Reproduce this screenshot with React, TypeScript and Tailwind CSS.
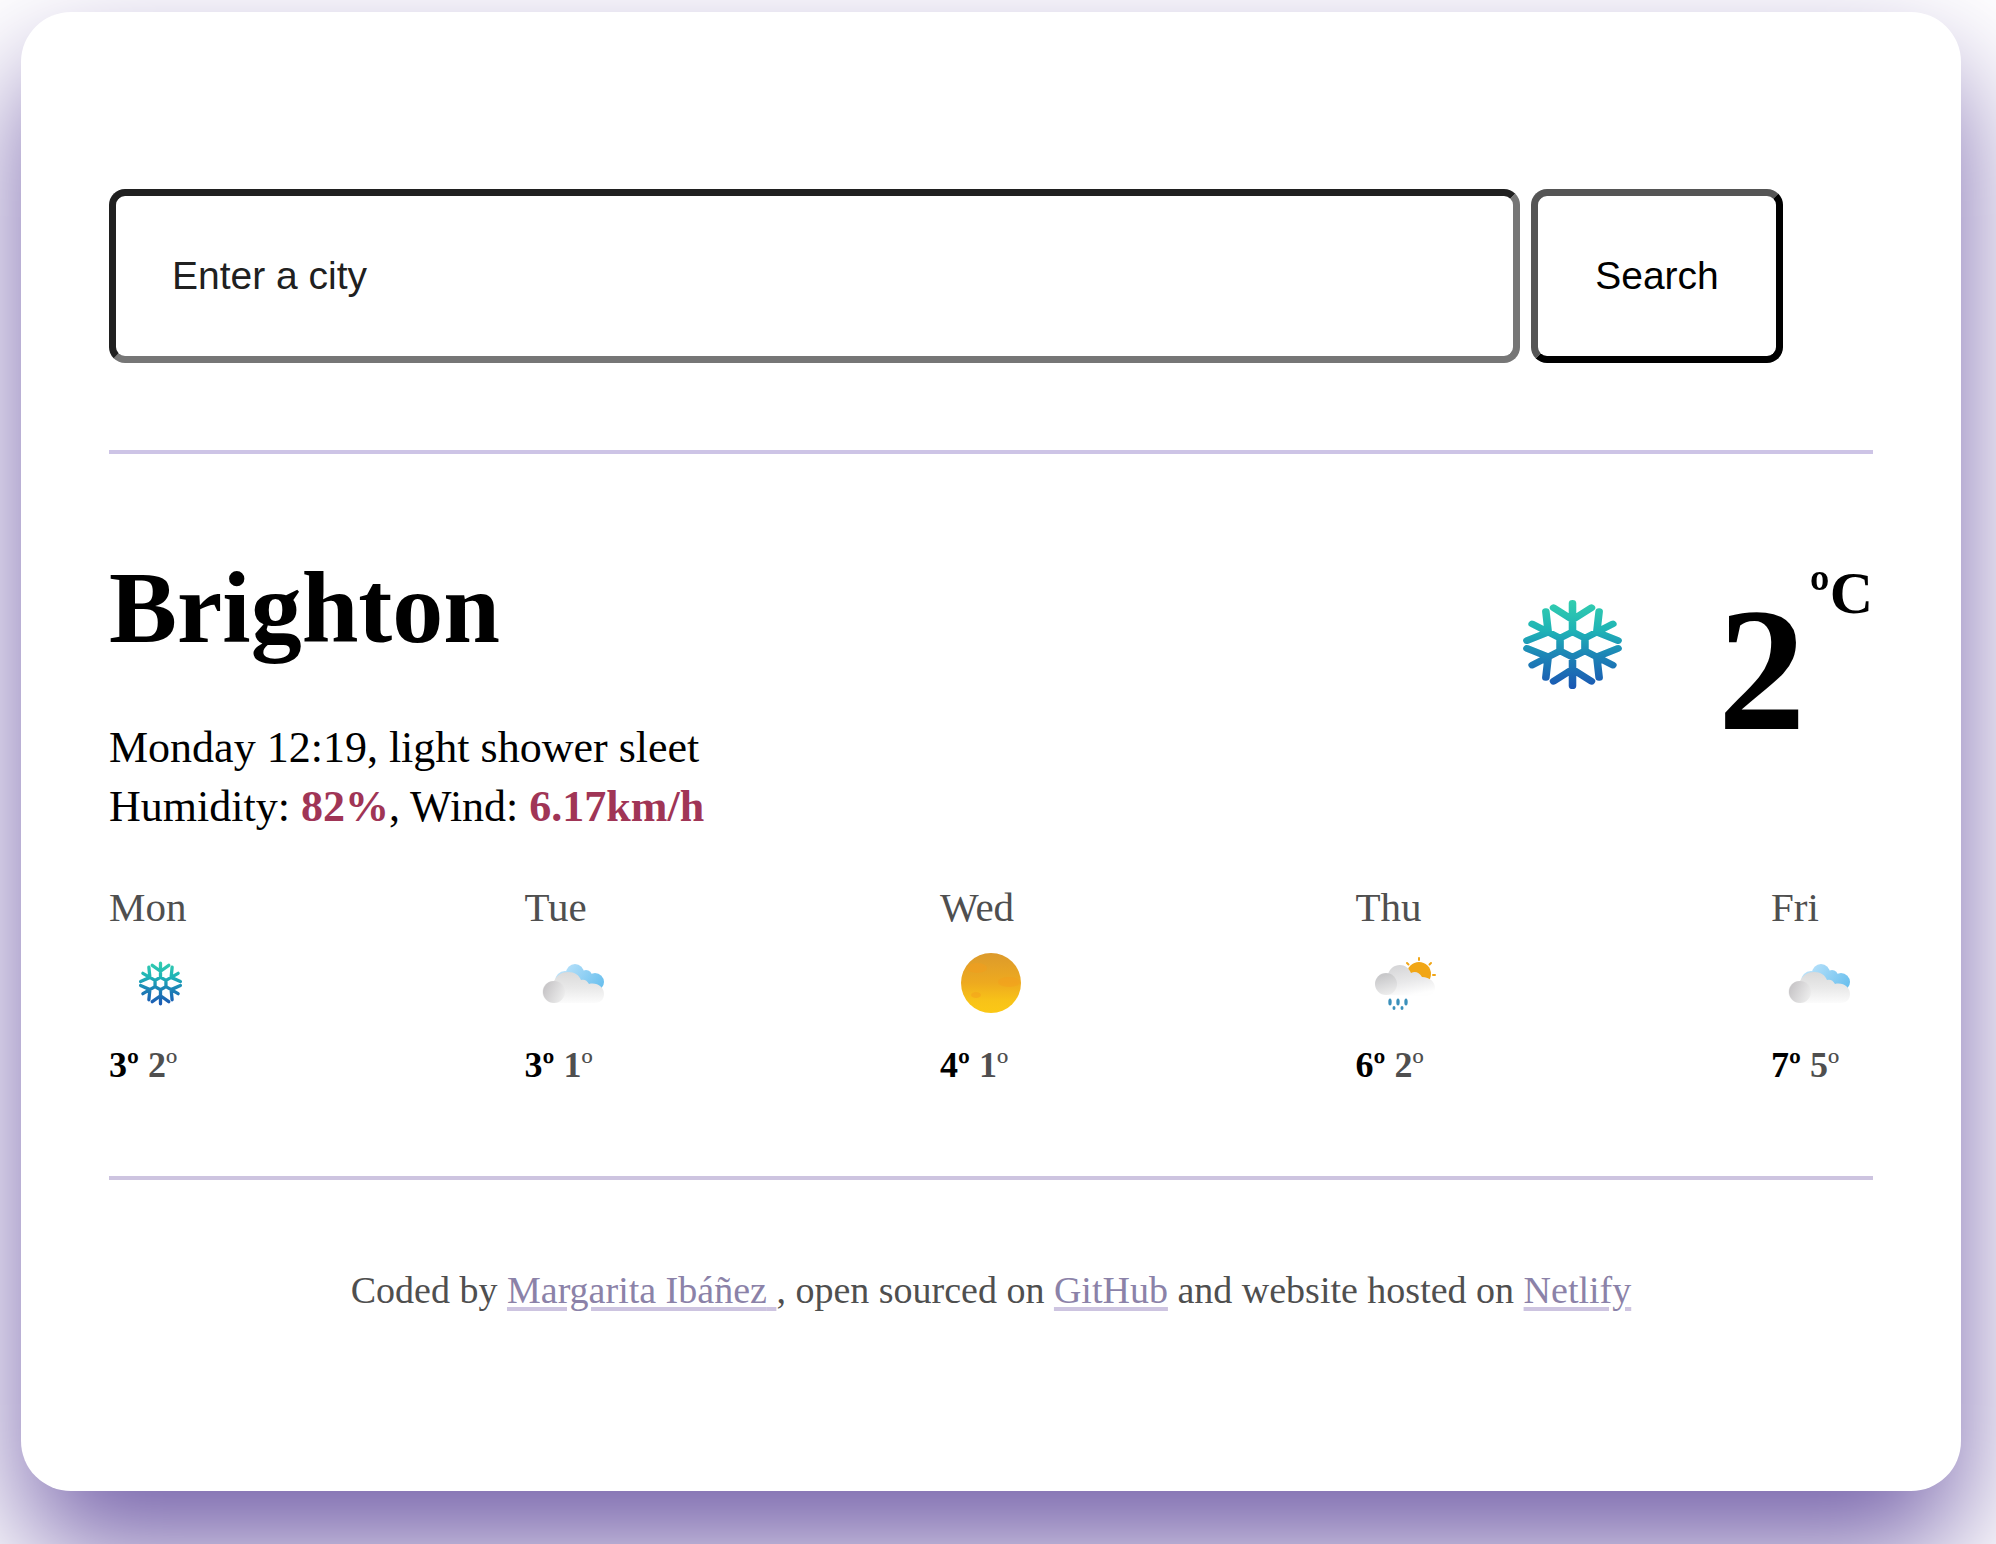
import React from "react";

const point = (x: number, y: number, turn: number) => {
  const a = (turn * Math.PI) / 180;
  const px = x * Math.cos(a) - y * Math.sin(a);
  const py = x * Math.sin(a) + y * Math.cos(a);
  return `${px.toFixed(1)} ${py.toFixed(1)}`;
};

const turns = [0, 60, 120, 180, 240, 300];

const flakePath =
  turns
    .map(
      (t) =>
        `M${point(0, -38, t)}L${point(0, -123, t)}M${point(-50, -110, t)}L${point(0, -74, t)}L${point(50, -110, t)}`
    )
    .join("") +
  "M" +
  turns.map((t) => point(0, -38, t)).join("L") +
  "Z";

function Snowflake({ id, className }: { id: string; className: string }) {
  return (
    <svg viewBox="-136 -136 272 272" preserveAspectRatio="none" className={className} aria-hidden="true">
      <defs>
        <linearGradient id={id} gradientUnits="userSpaceOnUse" x1="0" y1="-136" x2="0" y2="136">
          <stop offset="0" stopColor="#33cfae" />
          <stop offset="0.35" stopColor="#1fb3b6" />
          <stop offset="0.6" stopColor="#1d87b6" />
          <stop offset="1" stopColor="#1a55b3" />
        </linearGradient>
      </defs>
      <path d={flakePath} fill="none" stroke={`url(#${id})`} strokeWidth="20" strokeLinecap="round" strokeLinejoin="round" />
    </svg>
  );
}

function Clouds({ id }: { id: string }) {
  return (
    <svg viewBox="0 0 102 102" className="size-full" aria-hidden="true">
      <defs>
        <linearGradient id={`${id}-sky`} gradientUnits="userSpaceOnUse" x1="40" y1="32" x2="76" y2="56">
          <stop offset="0" stopColor="#b8e1fa" />
          <stop offset="1" stopColor="#6bc0ee" />
        </linearGradient>
        <linearGradient id={`${id}-front`} gradientUnits="userSpaceOnUse" x1="0" y1="40" x2="0" y2="72">
          <stop offset="0" stopColor="#dadada" />
          <stop offset="0.5" stopColor="#e9e9e9" />
          <stop offset="1" stopColor="#fdfdfd" />
        </linearGradient>
        <linearGradient id={`${id}-ball`} gradientUnits="userSpaceOnUse" x1="20" y1="55" x2="39" y2="64">
          <stop offset="0" stopColor="#c8c6c8" />
          <stop offset="1" stopColor="#ececec" />
        </linearGradient>
      </defs>
      <g fill={`url(#${id}-sky)`}>
        <circle cx="40" cy="49" r="10" />
        <circle cx="50" cy="41" r="9" />
        <circle cx="61" cy="44" r="6" />
        <circle cx="70" cy="50" r="9" />
        <path d="M48 44h20v14H48z" />
      </g>
      <path
        d="M28 71A11 11 0 0 1 29 49C32 43 37 40 43 40C50 40 54 43 56 48C59 47 62 48 64 52C72 50 79 55 79 62C79 68 75 71 69 71Z"
        fill={`url(#${id}-front)`}
      />
      <circle cx="29" cy="60" r="11" fill={`url(#${id}-ball)`} />
    </svg>
  );
}

function Sun() {
  return (
    <svg viewBox="0 0 102 102" className="size-full" aria-hidden="true">
      <defs>
        <linearGradient id="sun-body" x1="0" y1="0" x2="0" y2="1">
          <stop offset="0" stopColor="#dc9a2c" />
          <stop offset="0.5" stopColor="#eeaa1f" />
          <stop offset="0.8" stopColor="#f8c318" />
          <stop offset="1" stopColor="#fbc816" />
        </linearGradient>
      </defs>
      <circle cx="51" cy="51" r="30" fill="url(#sun-body)" />
      <g fill="#f59d1c" opacity="0.45">
        <ellipse cx="37" cy="36" rx="10" ry="5" />
        <ellipse cx="69" cy="50" rx="11" ry="5" />
        <ellipse cx="36" cy="63" rx="5" ry="3" />
      </g>
    </svg>
  );
}

function ShowerSun() {
  return (
    <svg viewBox="0 0 102 102" className="size-full" aria-hidden="true">
      <defs>
        <linearGradient id="shower-front" gradientUnits="userSpaceOnUse" x1="40" y1="34" x2="46" y2="65">
          <stop offset="0" stopColor="#d6d6d8" />
          <stop offset="0.55" stopColor="#e9e9ea" />
          <stop offset="1" stopColor="#fefefe" />
        </linearGradient>
        <linearGradient id="shower-ball" gradientUnits="userSpaceOnUse" x1="28" y1="43" x2="34" y2="63">
          <stop offset="0" stopColor="#c8c8ca" />
          <stop offset="1" stopColor="#eeeeee" />
        </linearGradient>
      </defs>
      <circle cx="63" cy="42" r="12" fill="#f1a616" />
      <path
        d="M63 26v2M75 31l-1.500 1.500M79 43h-2M51 31l1.500 1.500"
        stroke="#f1a616"
        strokeWidth="2"
        strokeLinecap="round"
      />
      <path
        d="M30 63A11 11 0 0 1 32 43C33 37 38 33 44 33C49 33 53 36 55 41C59 39 63 40 66 45C74 45 79 50 79 56C79 61 75 64 70 64Z"
        fill="url(#shower-front)"
      />
      <circle cx="30" cy="52" r="11" fill="url(#shower-ball)" />
      <g fill="#3b90bb">
        <ellipse cx="34" cy="70" rx="1.700" ry="3.500" />
        <ellipse cx="42" cy="70" rx="1.700" ry="3.500" />
        <ellipse cx="50" cy="70" rx="1.700" ry="3.500" />
        <ellipse cx="38" cy="76" rx="1.500" ry="2" />
        <ellipse cx="46" cy="76" rx="1.500" ry="2" />
      </g>
    </svg>
  );
}

const forecast = [
  { day: "Mon", icon: <Snowflake id="flake-mon" className="size-[45px]" />, max: 3, min: 2 },
  { day: "Tue", icon: <Clouds id="clouds-tue" />, max: 3, min: 1 },
  { day: "Wed", icon: <Sun />, max: 4, min: 1 },
  { day: "Thu", icon: <ShowerSun />, max: 6, min: 2 },
  { day: "Fri", icon: <Clouds id="clouds-fri" />, max: 7, min: 5 },
];

const linkClass =
  "text-[#8b82a8] underline decoration-[#cdc4e0] decoration-4 underline-offset-4";

export default function App() {
  return (
    <div className="min-h-screen overflow-hidden bg-white pt-3 pr-[35px] pb-[53px] pl-[21px] font-['Liberation_Serif',serif] text-black">
      <main className="rounded-[50px] bg-white px-[88px] pt-[177px] pb-[179px] shadow-[0_59px_118px_#7561aa]">
        <form
          className="flex gap-[11px] font-['Liberation_Sans',sans-serif] text-[39px]"
          onSubmit={(event) => event.preventDefault()}
        >
          <input
            type="search"
            aria-label="City"
            placeholder="Enter a city"
            className="h-[174px] w-4/5 appearance-none rounded-[16px] border-[7px] border-t-[#202020] border-r-[#767676] border-b-[#767676] border-l-[#202020] bg-white px-14 placeholder:text-[#202020]"
          />
          <button
            type="submit"
            className="h-[174px] rounded-[16px] border-[7px] border-t-[#555555] border-r-black border-b-black border-l-[#555555] bg-white px-[57px]"
          >
            Search
          </button>
        </form>

        <hr className="mt-[87px] border-t-4 border-[#cdc4e6]" />

        <section className="mt-[102px] flex items-start justify-between">
          <div>
            <h1 className="text-[102px] leading-[104px] font-bold">Brighton</h1>
            <p className="mt-[58px] text-[44px] leading-[59px]">
              Monday 12:19, light shower sleet
              <br />
              Humidity: <strong className="text-[#a03556]">82%</strong>, Wind:{" "}
              <strong className="text-[#a03556]">6.17km/h</strong>
            </p>
          </div>
          <div className="flex items-start font-bold">
            <Snowflake id="flake-now" className="mt-[43px] mr-[94px] h-[91px] w-[103px]" />
            <span className="mt-7 text-[176px] leading-[172px]">2</span>
            <span className="mt-2 ml-1 text-[60px] leading-[58px]">ºC</span>
          </div>
        </section>

        <section className="mt-[47px] flex justify-between">
          {forecast.map(({ day, icon, max, min }) => (
            <div key={day} className="w-[102px]">
              <div className="text-[41px] leading-[48px] text-[#4f4f4f]">{day}</div>
              <div className="mt-px flex size-[102px] items-center justify-center">{icon}</div>
              <div className="mt-[11px] text-[36px] leading-[40px] whitespace-nowrap">
                <strong>{max}º</strong>{" "}
                <span className="text-[#4f4f4f]">
                  <strong>{min}</strong>º
                </span>
              </div>
            </div>
          ))}
        </section>

        <hr className="mt-[91px] border-t-4 border-[#cdc4e0]" />

        <footer className="mt-[88px] text-center text-[38px] leading-[44px] text-[#4f4f4f]">
          Coded by{" "}
          <a href="#author" className={linkClass}>
            Margarita Ibáñez{" "}
          </a>
          , open sourced on{" "}
          <a href="#github" className={linkClass}>
            GitHub
          </a>{" "}
          and website hosted on{" "}
          <a href="#netlify" className={linkClass}>
            Netlify
          </a>
        </footer>
      </main>
    </div>
  );
}
